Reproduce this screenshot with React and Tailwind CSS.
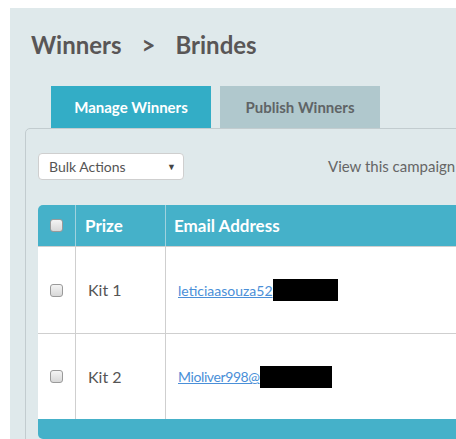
import React from 'react'

const font = { fontFamily: 'Lato, "Open Sans", sans-serif' }

function Checkbox() {
  return (
    <span className="inline-block w-[13px] h-[13px] rounded-[3px] border border-[#9a9a9a] bg-gradient-to-b from-[#f4f4f4] to-[#d8d8d8]" />
  )
}

function Redacted({ w }) {
  return <span className="inline-block h-[22px] bg-black align-middle" style={{ width: w }} />
}

export default function App() {
  return (
    <div className="w-[456px] h-[439px] overflow-hidden bg-white pt-[8px] pl-[10px]" style={font}>
      <div className="w-[640px] h-[460px] bg-[#dfe9eb] pl-[15px] pt-[22px]">
        {/* Breadcrumb */}
        <h1 className="ml-[6px] text-[24px] leading-[30px] font-bold text-[#595656] flex gap-[20px]">
          <span>Winners</span>
          <span>&gt;</span>
          <span>Brindes</span>
        </h1>

        {/* Tabs */}
        <div className="ml-[26px] mt-[26px] flex gap-[9px]">
          <div className="w-[160px] h-[42px] bg-[#33adc6] text-white font-bold text-[15px] flex items-center justify-center">
            Manage Winners
          </div>
          <div className="w-[160px] h-[42px] bg-[#b0c8cd] text-[#5f6466] font-bold text-[15px] flex items-center justify-center">
            Publish Winners
          </div>
        </div>

        {/* Panel */}
        <div className="border border-[#c2cccf] rounded-tl-[5px] pl-[12px] pt-[24px]">
          <div className="flex items-center">
            <div className="w-[146px] h-[27px] bg-white border border-[#cfcfcf] rounded-[4px] flex items-center justify-between pl-[10px] pr-[7px] text-[14px] text-[#555]">
              <span>Bulk Actions</span>
              <span className="text-[9px] text-[#444]">▼</span>
            </div>
            <div className="ml-[144px] text-[15px] text-[#666]">View this campaign</div>
          </div>

          {/* Table */}
          <div className="mt-[25px] w-[560px] rounded-t-[5px] rounded-bl-[5px] overflow-hidden">
            <div className="flex h-[41px] bg-[#45b1c9] text-white font-bold text-[17px]">
              <div className="w-[38px] flex items-center justify-center border-r border-[#9fd2de]">
                <Checkbox />
              </div>
              <div className="w-[90px] flex items-center pl-[9px] border-r border-[#9fd2de]">Prize</div>
              <div className="flex-1 flex items-center pl-[8px]">Email Address</div>
            </div>
            <div className="bg-white border-t border-[#cfcfcf]">
              <div className="flex h-[87px] border-b border-[#cfcfcf] text-[14px]">
                <div className="w-[38px] flex items-center justify-center border-r border-[#cfcfcf]">
                  <Checkbox />
                </div>
                <div className="w-[90px] flex items-center pl-[12px] text-[16px] text-[#555] border-r border-[#cfcfcf]">Kit 1</div>
                <div className="flex-1 flex items-center pl-[12px]">
                  <span className="text-[#4a8fd8] underline">leticiaasouza52</span>
                  <Redacted w={65} />
                </div>
              </div>
              <div className="flex h-[85px] text-[14px]">
                <div className="w-[38px] flex items-center justify-center border-r border-[#cfcfcf]">
                  <Checkbox />
                </div>
                <div className="w-[90px] flex items-center pl-[12px] text-[16px] text-[#555] border-r border-[#cfcfcf]">Kit 2</div>
                <div className="flex-1 flex items-center pl-[12px]">
                  <span className="text-[#4a8fd8] underline tracking-[-0.4px]">Mioliver998@</span>
                  <Redacted w={72} />
                </div>
              </div>
            </div>
            <div className="h-[20px] bg-[#45b1c9]" />
          </div>
        </div>
      </div>
    </div>
  )
}
